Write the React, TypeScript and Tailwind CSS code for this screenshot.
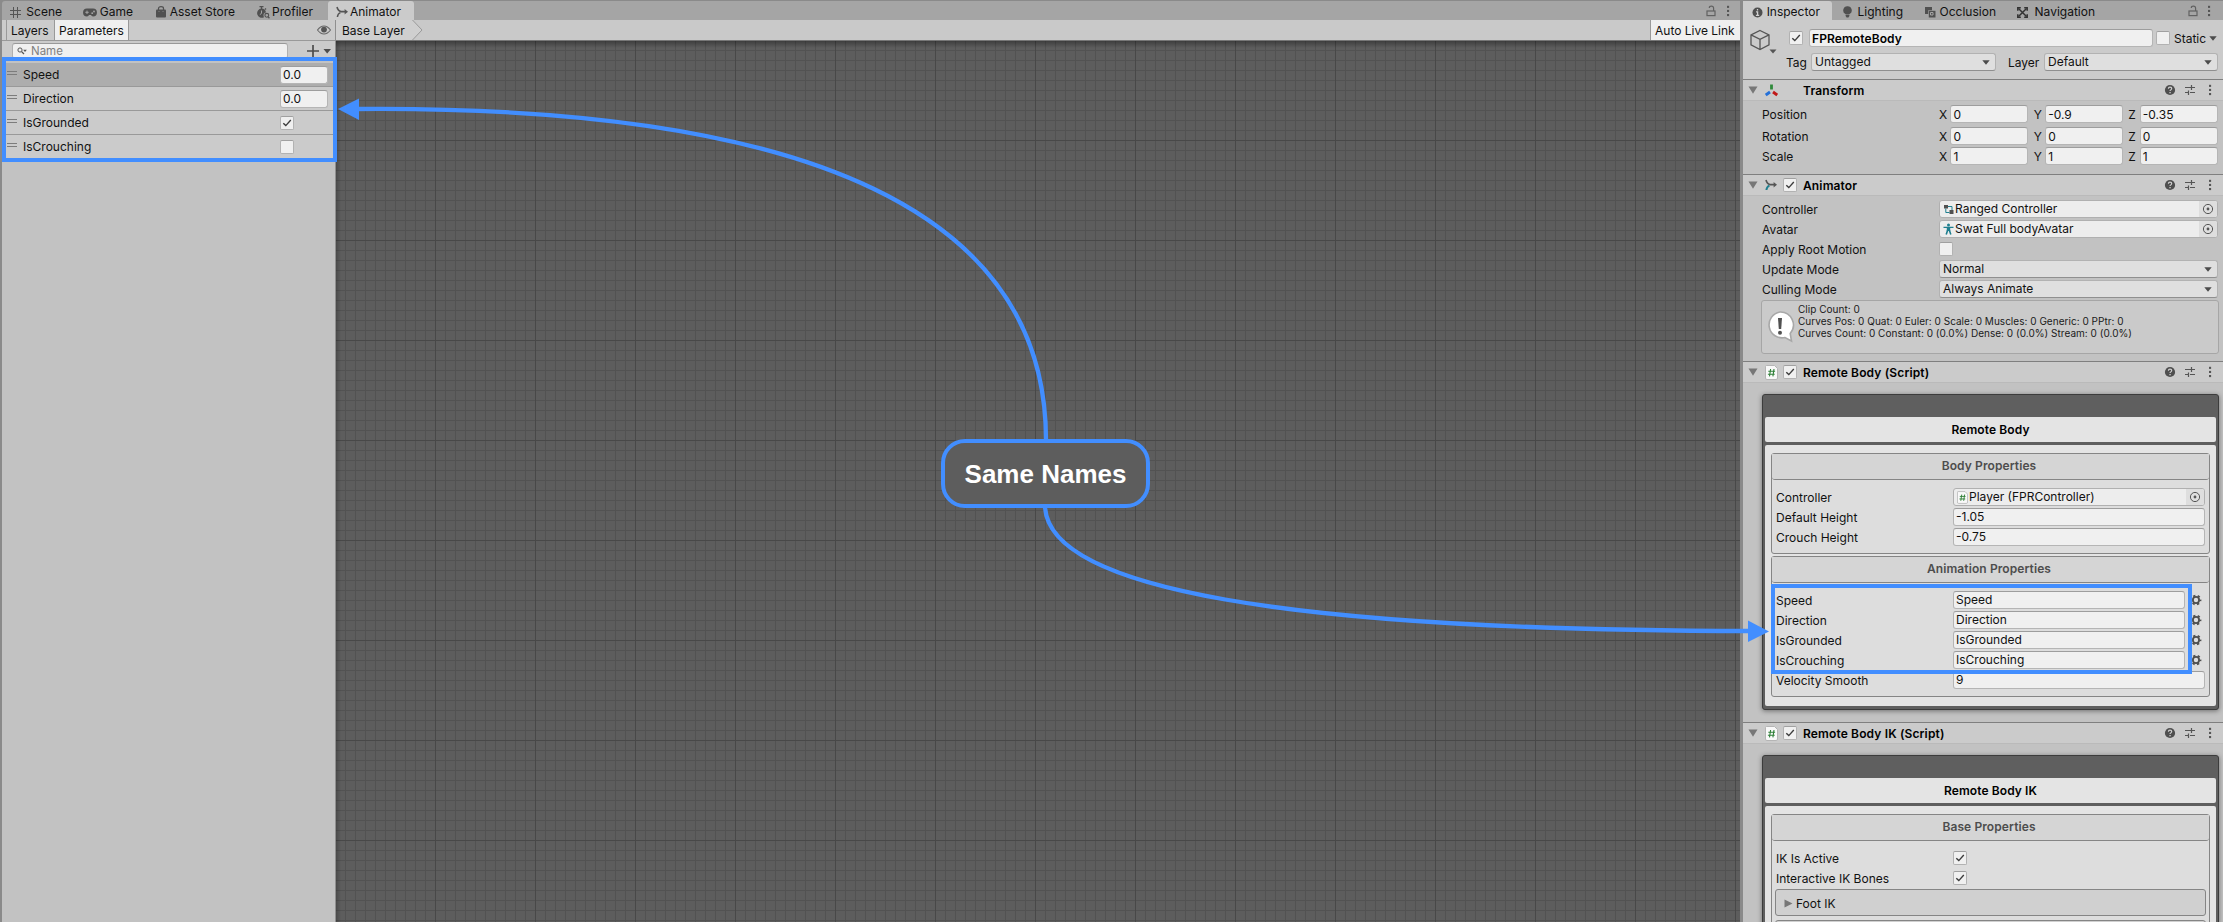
import React from "react";

type Kids = { children?: React.ReactNode };

/* ---------- icons ---------- */
const Lock = () => (
  <svg width="10" height="12" viewBox="0 0 10 12" fill="none" stroke="#616161" strokeWidth="1.2">
    <rect x="1" y="6" width="8" height="4.6" />
    <path d="M7.6 6V3.2Q7.6 1.2 5.4 1.2Q3.3 1.2 3.3 3" />
  </svg>
);
const Dots = () => (
  <svg width="4" height="12" viewBox="0 0 4 12" fill="#555">
    <rect x="1" y="0.8" width="2.1" height="2.1" />
    <rect x="1" y="4.9" width="2.1" height="2.1" />
    <rect x="1" y="9" width="2.1" height="2.1" />
  </svg>
);
const Help = () => (
  <svg width="12" height="12" viewBox="0 0 12 12">
    <circle cx="6" cy="6" r="5.1" fill="#4f4f4f" />
    <path d="M4.4 4.8Q4.4 3.1 6 3.1Q7.7 3.1 7.7 4.6Q7.7 5.5 6.7 6Q6 6.3 6 7.1" fill="none" stroke="#d0d0d0" strokeWidth="1.2" />
    <rect x="5.4" y="8" width="1.3" height="1.3" fill="#d0d0d0" />
  </svg>
);
const Preset = () => (
  <svg width="12" height="12" viewBox="0 0 12 12" stroke="#555" strokeWidth="1.2" fill="none">
    <path d="M1 3.5H7.5M7.5 1V6M7.5 3.5H11M1 8.5H4.5M4.5 6.4V11M6 8.5H11" />
  </svg>
);
const Fold = () => (
  <svg width="10" height="8" viewBox="0 0 10 8">
    <path d="M0.5 0.5H9.5L5 7.8Z" fill="#777" />
  </svg>
);
const Caret = () => (
  <svg width="8" height="5" viewBox="0 0 8 5">
    <path d="M0.3 0.3H7.7L4 4.8Z" fill="#4c4c4c" />
  </svg>
);
const AnimIcon = ({ teal = false }: { teal?: boolean }) => (
  <svg width="13" height="12" viewBox="0 0 13 12" fill="none" strokeWidth="1.6">
    <path d="M1 1Q2 5 5 5.6H9.5" stroke="#555" />
    <path d="M1.4 11Q1.8 7.6 4.4 6.6" stroke={teal ? "#1f7f8f" : "#555"} strokeWidth={teal ? 2 : 1.5} />
    <path d="M8.6 3L12 5.7L8.6 8.4Z" fill="#555" stroke="none" />
  </svg>
);
const ScriptIcon = ({ small = false }: { small?: boolean }) => (
  <svg className="shrink-0" width={small ? 11 : 13} height={small ? 13 : 15} viewBox="0 0 13 15">
    <path d="M1.5 0.5H9.5L12.5 3.5V13Q12.5 14.5 11 14.5H2Q0.5 14.5 0.5 13V1.5Q0.5 0.5 1.5 0.5Z" fill="#f9f9f9" stroke="#b0b0b0" strokeWidth="0.9" />
    <path d="M5.6 4L4.5 11.4M9 4L7.9 11.4M3.3 6.2H10.1M2.9 9.2H9.7" stroke="#2f8038" strokeWidth="1.1" fill="none" />
  </svg>
);
const Picker = () => (
  <svg width="12" height="12" viewBox="0 0 12 12">
    <circle cx="6" cy="6" r="4.6" fill="none" stroke="#555" strokeWidth="1" />
    <circle cx="6" cy="6" r="1.4" fill="#555" />
  </svg>
);
const Gear = () => (
  <svg width="12" height="12" viewBox="0 0 12 12" fill="none" stroke="#4f4f4f">
    <circle cx="6" cy="6" r="3.1" strokeWidth="1.8" />
    <circle cx="6" cy="6" r="4.5" strokeWidth="1.8" strokeDasharray="2.3 2.412" strokeDashoffset="1.15" />
  </svg>
);
const Drag = () => (
  <svg width="10" height="6" viewBox="0 0 10 6" stroke="#7c7c7c">
    <path d="M0 1.5H10M0 4.5H10" />
  </svg>
);

/* ---------- controls ---------- */
const Check = ({ on = false }: { on?: boolean }) => (
  <span className="flex h-[14px] w-[14px] shrink-0 items-center justify-center rounded-[2px] border border-[#b2b2b2] border-t-[#a0a0a0] bg-[#f0f0f0]">
    {on && (
      <svg width="10" height="10" viewBox="0 0 10 10" fill="none" stroke="#3c3c3c" strokeWidth="1.4">
        <path d="M1.3 5.2L3.8 7.6L8.8 2" />
      </svg>
    )}
  </span>
);
const Field = ({ children, className = "" }: Kids & { className?: string }) => (
  <span className={`flex h-[18px] shrink-0 items-center whitespace-pre rounded-[3px] border border-[#b5b5b5] border-t-[#9d9d9d] bg-[#f0f0f0] pl-[2px] ${className}`}>
    {children}
  </span>
);
const Select = ({ children, className = "" }: Kids & { className?: string }) => (
  <span className={`flex h-[18px] shrink-0 items-center justify-between rounded-[3px] border border-[#b2b2b2] border-b-[#8f8f8f] bg-[#dfdfdf] pr-[5px] pl-[3px] ${className}`}>
    <span>{children}</span>
    <Caret />
  </span>
);
const ObjectField = ({ icon, children, className = "" }: Kids & { icon: React.ReactNode; className?: string }) => (
  <span className={`flex h-[18px] shrink-0 items-center overflow-hidden rounded-[3px] border border-[#b0b0b0] bg-[#ededed] pl-[2px] ${className}`}>
    <span className="flex w-[13px] items-center justify-center">{icon}</span>
    <span className="flex-1">{children}</span>
    <span className="flex h-full w-[18px] items-center justify-center bg-[#dedede]">
      <Picker />
    </span>
  </span>
);

/* ---------- left panel ---------- */
const Tab = ({ icon, label, className }: { icon: React.ReactNode; label: string; className: string }) => (
  <div className={`flex h-full shrink-0 items-center pt-[3px] ${className}`}>
    {icon}
    <span className="ml-auto text-left">{label}</span>
  </div>
);

const Param = ({ name, children, first = false }: Kids & { name: string; first?: boolean }) => (
  <div className={`flex h-[24px] items-center border-b border-[#999] pl-[5px] ${first ? "bg-[#adadad]" : "bg-[#cbcbcb]"}`}>
    <span className="-mt-[3px]">
      <Drag />
    </span>
    <span className="ml-[6px] w-[257px]">{name}</span>
    {children}
  </div>
);

const ParametersPanel = () => (
  <div className="flex w-[334px] shrink-0 flex-col border-r border-[#8f8f8f] bg-[#c2c2c2]">
    <div className="flex h-[21px] shrink-0 items-center border-b border-[#999] bg-[#cbcbcb] pl-[4px]">
      <div className="flex h-full w-[48px] items-center border-l border-[#999] pt-px pl-[4px]">Layers</div>
      <div className="flex h-full w-[75px] items-center border-x border-[#999] bg-[#efefef] pt-px pl-[4px]">Parameters</div>
      <svg className="ml-auto mr-[4px]" width="14" height="10" viewBox="0 0 14 10">
        <path d="M0.5 5Q3.5 1 7 1Q10.5 1 13.5 5Q10.5 9 7 9Q3.5 9 0.5 5Z" fill="none" stroke="#666" strokeWidth="1.1" />
        <circle cx="7" cy="4.6" r="2.9" fill="#555" />
      </svg>
    </div>
    <div className="flex h-[20px] shrink-0 items-center bg-[#cbcbcb] pl-[10px]">
      <div className="flex h-[16px] w-[276px] items-center rounded-[3px] border border-[#b0b0b0] border-t-[#999] bg-[#f0f0f0] pl-[4px] text-[#808080]">
        <svg width="10" height="8" viewBox="0 0 10 8" fill="none" stroke="#555">
          <circle cx="3" cy="3" r="2.1" />
          <path d="M4.6 4.6L7 7" strokeWidth="1.3" />
          <path d="M6.2 2.8H9.8L8 5Z" fill="#555" stroke="none" />
        </svg>
        <span className="ml-[4px] text-[11.5px]">Name</span>
      </div>
      <svg className="ml-[19px]" width="25" height="12" viewBox="0 0 25 12">
        <path d="M6 0V12M0 6H12" stroke="#4c4c4c" strokeWidth="1.7" />
        <path d="M16.5 4H24L20.2 8.5Z" fill="#4c4c4c" />
      </svg>
    </div>
    <div className="h-[2px] shrink-0" />
    <Param name="Speed" first>
      <Field className="w-[48px]">0.0</Field>
    </Param>
    <Param name="Direction">
      <Field className="w-[48px]">0.0</Field>
    </Param>
    <Param name="IsGrounded">
      <Check on />
    </Param>
    <Param name="IsCrouching">
      <Check />
    </Param>
  </div>
);

const GraphPanel = () => (
  <div className="flex flex-1 flex-col">
    <div className="flex h-[21px] shrink-0 items-center justify-between border-b border-[#777] bg-[#c9c9c9]">
      <div className="flex h-full items-center bg-[#cfcfcf] pl-[6px]">
        <span className="w-[70px] pt-px">Base Layer</span>
        <svg className="bg-[#c9c9c9]" width="11" height="20" viewBox="0 0 11 20">
          <path d="M0 0H1L10 10L1 20H0Z" fill="#cfcfcf" />
          <path d="M0.5 0L10 10L0.5 20" fill="none" stroke="#999" />
        </svg>
      </div>
      <div className="flex h-full w-[90px] items-center border-l border-[#999] bg-[#efefef] pt-px pl-[4px]">Auto Live Link</div>
    </div>
    <div className="flex-1 bg-[#5d5d5d] bg-[linear-gradient(to_bottom,#00000055,#0000_7px),linear-gradient(to_right,#00000033,#0000_5px),linear-gradient(to_right,#484848_1px,#0000_1px),linear-gradient(to_bottom,#484848_1px,#0000_1px),linear-gradient(to_right,#525252_1px,#0000_1px),linear-gradient(to_bottom,#525252_1px,#0000_1px)] bg-[length:100%_100%,100%_100%,100px_100px,100px_100px,10px_10px,10px_10px] bg-[position:0_0,0_0,99px_0,0_99px,9px_0,0_9px]" />
  </div>
);

/* ---------- inspector ---------- */
const Header = ({ title, icon, check = true }: { title: string; icon: React.ReactNode; check?: boolean }) => (
  <div className="flex h-[22px] shrink-0 items-center border-t border-b border-t-[#7f7f7f] border-b-[#bababa] bg-[#cbcbcb] pl-[5px]">
    <Fold />
    <span className="ml-[6px] flex w-[14px] items-center justify-center">{icon}</span>
    <span className="ml-[5px] w-[20px]">{check && <Check on />}</span>
    <span className="flex-1 pt-px font-semibold tracking-[0.14px] text-black">{title}</span>
    <span className="flex w-[59px] items-center">
      <Help />
      <span className="ml-[8px]">
        <Preset />
      </span>
      <span className="ml-[12px]">
        <Dots />
      </span>
    </span>
  </div>
);

const Vec = ({ label, v, className = "" }: { label: string; v: string[]; className?: string }) => (
  <div className={`flex h-[20px] items-center pl-[19px] ${className}`}>
    <span className="w-[178px] pt-px">{label}</span>
    {["X", "Y", "Z"].map((a, i) => (
      <span key={a} className="flex w-[94.7px] shrink-0 items-center">
        <span className="w-[11.5px] pt-px">{a}</span>
        <Field className="w-[78px] pt-[2px]">{v[i]}</Field>
      </span>
    ))}
  </div>
);

const Row = ({ label, children }: Kids & { label: string }) => (
  <div className="flex h-[20px] items-center pl-[19px]">
    <span className="w-[177px] shrink-0 pt-px">{label}</span>
    {children}
  </div>
);

const PRow = ({ label, children }: Kids & { label: string }) => (
  <div className="flex h-[20px] items-center pl-[4px]">
    <span className="w-[177px] shrink-0 pt-px">{label}</span>
    {children}
  </div>
);

const Card = ({ title, children, className = "" }: Kids & { title: string; className?: string }) => (
  <div className={`mt-[11px] ml-[19px] flex w-[457px] flex-col rounded-[3px] border border-[#3c3c3c] bg-[#5f5f5f] px-[2px] pt-[22px] pb-[3px] shadow-[0_1px_5px_#00000070] ${className}`}>
    <div className="flex h-[25px] shrink-0 items-center justify-center rounded-[2px] bg-[#e4e4e4] font-semibold tracking-[0.1px] text-black">{title}</div>
    <div className="mt-[3px] flex flex-1 flex-col gap-[2px] rounded-[2px] bg-[#e4e4e4] px-[6px] pt-[8px]">{children}</div>
  </div>
);

const Group = ({ title, children, className = "" }: Kids & { title: string; className?: string }) => (
  <div className={`shrink-0 rounded-[3px] border border-[#858585] bg-[#dddddd] ${className}`}>
    <div className="mb-[7px] flex h-[26px] items-center justify-center rounded-b-[3px] border-b border-[#858585] bg-[#d5d5d5] pr-[3px] pb-px font-semibold tracking-[0.1px] text-[#4d4d4d]">{title}</div>
    {children}
  </div>
);

const Inspector = () => (
  <div className="flex w-[480px] shrink-0 flex-col overflow-hidden bg-[#c2c2c2]">
    <div className="flex h-[19px] shrink-0 bg-[#a5a5a5]">
      <Tab
        className="w-[89px] rounded-tr-[3px] bg-[#cbcbcb] pr-[12px] pl-[9px]"
        label="Inspector"
        icon={
          <svg width="11" height="11" viewBox="0 0 11 11">
            <circle cx="5.5" cy="5.5" r="5" fill="#4f4f4f" />
            <path d="M5.5 2V3.4M4 4.9H5.6V8.2M3.9 8.4H7.2" stroke="#d0d0d0" strokeWidth="1.3" fill="none" />
          </svg>
        }
      />
      <Tab
        className="ml-[11px] w-[60px]"
        label="Lighting"
        icon={
          <svg width="9" height="12" viewBox="0 0 9 12" fill="#505050">
            <path d="M4.5 0.3A4.1 4.1 0 0 1 6.6 8H2.4A4.1 4.1 0 0 1 4.5 0.3Z" />
            <path d="M2.6 8.6H6.4V10L5.4 11.6H3.6L2.6 10Z" />
          </svg>
        }
      />
      <Tab
        className="ml-[22px] w-[71px]"
        label="Occlusion"
        icon={
          <svg width="11" height="11" viewBox="0 0 11 11">
            <path d="M0 0H7V3.2H3.2V7H0Z" fill="#505050" />
            <path d="M3.8 3.8H10.5V10.5H3.8Z" fill="#505050" />
            <path d="M5.5 5.5H8V8H5.5Z" fill="none" stroke="#a5a5a5" />
          </svg>
        }
      />
      <Tab
        className="ml-[21px] w-[78px]"
        label="Navigation"
        icon={
          <svg width="11" height="11" viewBox="0 0 11 11" fill="none" stroke="#333" strokeWidth="1.5">
            <path d="M1.5 1.5L9.5 9.5M9.5 1.5L1.5 9.5" />
            <path d="M0.8 3.8V0.8H3.8M7.2 0.8H10.2V3.8M10.2 7.2V10.2H7.2M3.8 10.2H0.8V7.2" />
          </svg>
        }
      />
      <span className="ml-auto flex items-center pr-[12px]">
        <Lock />
        <span className="ml-[9px]">
          <Dots />
        </span>
      </span>
    </div>
    <div className="h-[59px] shrink-0 bg-[#cbcbcb]">
      <div className="flex h-[33px] items-center pt-[3px] pl-[7px]">
        <svg className="mt-[8px]" width="28" height="26" viewBox="0 0 28 26" fill="none" stroke="#555" strokeWidth="1.3">
          <path d="M10 1.5L19 5.8V15.8L10 20.5L1 15.8V5.8Z M1 5.8L10 10.3L19 5.8M10 10.3V20.5" />
          <path d="M19.5 20.5H26.5L23 24.5Z" fill="#555" stroke="none" />
        </svg>
        <span className="ml-[11px]">
          <Check on />
        </span>
        <Field className="ml-[6px] w-[344px] pt-[2px] font-semibold tracking-[0.1px] text-black">FPRemoteBody</Field>
        <span className="mr-[4px] ml-[3px]">
          <Check />
        </span>
        <span className="w-[35px] pt-px">Static</span>
        <Caret />
      </div>
      <div className="-mt-px flex h-[20px] items-center pl-[43px]">
        <span className="w-[25px] pt-px">Tag</span>
        <Select className="w-[185px]">Untagged</Select>
        <span className="ml-[12px] w-[36px] pt-px">Layer</span>
        <Select className="w-[174px]">Default</Select>
      </div>
    </div>
    <div className="h-[95px] shrink-0">
      <Header
        title="Transform"
        check={false}
        icon={
          <svg width="13" height="13" viewBox="0 0 13 13" strokeWidth="2.8">
            <path d="M6.5 0.5V5.5" stroke="#2f8a3a" />
            <path d="M5 8L0.8 11" stroke="#2470d8" />
            <path d="M8 8L12.2 11" stroke="#c01818" />
          </svg>
        }
      />
      <div className="pt-[3px]">
        <Vec label="Position" v={["0", "-0.9", "-0.35"]} />
        <Vec label="Rotation" v={["0", "0", "0"]} className="mt-[2px]" />
        <Vec label="Scale" v={["1", "1", "1"]} />
      </div>
    </div>
    <div className="h-[187px] shrink-0">
      <Header title="Animator" icon={<AnimIcon teal />} />
      <div className="pt-[3px]">
        <Row label="Controller">
          <ObjectField
            className="w-[279px]"
            icon={
              <svg width="11" height="11" viewBox="0 0 11 11">
                <path d="M1 1H5V4.5H1ZM6.5 6H10.5V10H6.5Z" fill="#505050" />
                <path d="M5 2.5H9V6M2.8 4.5V8.5H6.5" fill="none" stroke="#1f7f8f" />
              </svg>
            }
          >
            Ranged Controller
          </ObjectField>
        </Row>
        <Row label="Avatar">
          <ObjectField
            className="w-[279px]"
            icon={
              <svg width="11" height="12" viewBox="0 0 11 12" fill="none" stroke="#1f7f8f">
                <circle cx="5.5" cy="1.9" r="1.5" fill="#1f7f8f" stroke="none" />
                <path d="M0.5 4.4H10.5" strokeWidth="1.4" />
                <path d="M5.5 4V8" strokeWidth="3.4" />
                <path d="M4.7 7L3.2 11.5M6.3 7L7.8 11.5" strokeWidth="1.6" />
              </svg>
            }
          >
            Swat Full bodyAvatar
          </ObjectField>
        </Row>
        <Row label="Apply Root Motion">
          <Check />
        </Row>
        <Row label="Update Mode">
          <Select className="w-[279px]">Normal</Select>
        </Row>
        <Row label="Culling Mode">
          <Select className="w-[279px]">Always Animate</Select>
        </Row>
        <div className="mt-px ml-[18px] flex h-[54px] w-[458px] rounded-[3px] border border-[#a6a6a6] bg-[#cacaca] pl-[3px]">
          <svg className="mt-[9px]" width="30" height="34" viewBox="0 0 30 34">
            <path d="M15 2A13 13 0 1 0 20 27.5L26.5 31L25.2 23.5A13 13 0 0 0 15 2Z" fill="#fff" stroke="#a8a8a8" strokeWidth="1.6" />
            <path d="M13 8H17L16.2 19H13.8Z" fill="#505050" />
            <circle cx="15" cy="22.8" r="2" fill="#505050" />
          </svg>
          <div className="ml-[3px] pt-[2px] text-[10px] leading-[12px] tracking-[0.025px] whitespace-pre text-[#1a1a1a]">
            <div>Clip Count: 0</div>
            <div>Curves Pos: 0 Quat: 0 Euler: 0 Scale: 0 Muscles: 0 Generic: 0 PPtr: 0</div>
            <div>Curves Count: 0 Constant: 0 (0.0%) Dense: 0 (0.0%) Stream: 0 (0.0%)</div>
          </div>
        </div>
      </div>
    </div>
    <div className="flex h-[361px] shrink-0 flex-col">
      <Header title="Remote Body (Script)" icon={<ScriptIcon />} />
      <Card title="Remote Body" className="h-[316px]">
        <Group title="Body Properties" className="h-[101px]">
          <PRow label="Controller">
            <ObjectField className="w-[252px]" icon={<ScriptIcon small />}>
              Player (FPRController)
            </ObjectField>
          </PRow>
          <PRow label="Default Height">
            <Field className="w-[252px]">-1.05</Field>
          </PRow>
          <PRow label="Crouch Height">
            <Field className="w-[252px]">-0.75</Field>
          </PRow>
        </Group>
        <Group title="Animation Properties" className="h-[141px]">
          {["Speed", "Direction", "IsGrounded", "IsCrouching"].map((n) => (
            <PRow key={n} label={n}>
              <Field className="mr-[5px] w-[232px]">{n}</Field>
              <Gear />
            </PRow>
          ))}
          <PRow label="Velocity Smooth">
            <Field className="w-[252px]">9</Field>
          </PRow>
        </Group>
      </Card>
    </div>
    <div className="flex h-[361px] shrink-0 flex-col">
      <Header title="Remote Body IK (Script)" icon={<ScriptIcon />} />
      <Card title="Remote Body IK" className="h-[316px]">
        <Group title="Base Properties" className="h-[240px]">
          <PRow label="IK Is Active">
            <Check on />
          </PRow>
          <PRow label="Interactive IK Bones">
            <Check on />
          </PRow>
          <div className="mx-[3px] mt-px flex h-[27px] items-center rounded-[3px] border border-[#858585] bg-[#d0d0d0] pt-[2px] pl-[8px]">
            <svg width="9" height="9" viewBox="0 0 9 9">
              <path d="M0.5 0.5V8.5L8.5 4.5Z" fill="#777" />
            </svg>
            <span className="ml-[3px]">Foot IK</span>
          </div>
          <div className="mx-[3px] mt-[4px] h-[27px] rounded-[3px] border border-[#858585] bg-[#d0d0d0]" />
        </Group>
      </Card>
    </div>
  </div>
);

/* ---------- annotations drawn over the panels ---------- */
const Annotations = () => (
  <div className="pointer-events-none absolute inset-0">
    <div className="absolute top-[57px] left-[2px] h-[105px] w-[335px] border-4 border-[#428eff]" />
    <div className="absolute top-[584px] left-[1771px] h-[90px] w-[421px] border-4 border-[#428eff]" />
    <svg className="absolute inset-0" width="2223" height="922" viewBox="0 0 2223 922" fill="none" stroke="#428eff" strokeWidth="4.3">
      <path d="M1046 440Q1046 103 356 109" />
      <path d="M1045 507Q1052 630 1752 631" />
      <path d="M338 109L359 98.5V120Z" fill="#428eff" stroke="none" />
      <path d="M1769 631.5L1748 620.5V642Z" fill="#428eff" stroke="none" />
    </svg>
    <div className="absolute top-[439px] left-[941px] flex h-[69px] w-[209px] items-center justify-center rounded-[24px] border-4 border-[#428eff] bg-[#5d5d5d] font-['Liberation_Sans',sans-serif] text-[26px] font-bold text-white">
      Same Names
    </div>
  </div>
);

export default function App() {
  return (
    <div className="relative flex h-[922px] w-[2223px] overflow-hidden bg-[#8a8a8a] pt-px pl-[2px] font-[Inter,sans-serif] text-[12px] leading-[16px] text-[#111]">
      <div className="flex w-[1738px] shrink-0 flex-col">
        <div className="flex h-[19px] shrink-0 rounded-tl-[3px] bg-[#a5a5a5]">
          <Tab
            className="ml-[8px] w-[52px]"
            label="Scene"
            icon={
              <svg width="11" height="11" viewBox="0 0 11 11" stroke="#555" fill="none">
                <path d="M3.5 0V11M7.5 0V11M0 3.5H11M0 7.5H11" />
              </svg>
            }
          />
          <Tab
            className="ml-[21px] w-[50px]"
            label="Game"
            icon={
              <svg width="14" height="9" viewBox="0 0 14 9">
                <path d="M4 0.5H10A3.9 3.9 0 0 1 10 8.4Q8.5 8.4 8 7H6Q5.5 8.4 4 8.4A3.9 3.9 0 0 1 4 0.5Z" fill="#505050" />
                <path d="M4 2.6V6M2.3 4.3H5.7" stroke="#a5a5a5" />
                <circle cx="9.2" cy="5.2" r="0.9" fill="#a5a5a5" />
                <circle cx="11" cy="3.5" r="0.9" fill="#a5a5a5" />
              </svg>
            }
          />
          <Tab
            className="ml-[23px] w-[79px]"
            label="Asset Store"
            icon={
              <svg width="10" height="12" viewBox="0 0 10 12">
                <path d="M2.5 4V2.5Q2.5 0.7 5 0.7Q7.5 0.7 7.5 2.5V4" fill="none" stroke="#505050" strokeWidth="1.2" />
                <rect x="0" y="3.4" width="10" height="8.2" rx="1" fill="#505050" />
                <path d="M3 5V5.6M7 5V5.6" stroke="#a5a5a5" />
              </svg>
            }
          />
          <Tab
            className="ml-[21px] w-[57px]"
            label="Profiler"
            icon={
              <svg width="14" height="13" viewBox="0 0 14 13">
                <path d="M3.5 0.6H7.5M5.5 0.6V3M9 2.5L10 3.5" stroke="#505050" strokeWidth="1.3" />
                <path d="M5.5 2.6A4.6 4.6 0 1 0 8 11.2Q7 9 8 7.6Q9 6.4 10 6.6A4.6 4.6 0 0 0 5.5 2.6Z" fill="#505050" />
                <path d="M5.5 4.5V7.4L3.8 8.6" stroke="#a5a5a5" fill="none" />
                <circle cx="10.8" cy="9.3" r="1.9" fill="none" stroke="#505050" strokeWidth="1.1" />
                <path d="M12 10.6L13.4 12.2" stroke="#505050" strokeWidth="1.3" />
              </svg>
            }
          />
          <Tab className="ml-[15px] w-[86px] rounded-t-[3px] bg-[#cbcbcb] pr-[13px] pl-[8px]" label="Animator" icon={<AnimIcon />} />
          <span className="ml-auto flex items-center pr-[10px]">
            <Lock />
            <span className="ml-[10px]">
              <Dots />
            </span>
          </span>
        </div>
        <div className="flex flex-1">
          <ParametersPanel />
          <GraphPanel />
        </div>
      </div>
      <div className="w-[3px] shrink-0" />
      <Inspector />
      <Annotations />
    </div>
  );
}
